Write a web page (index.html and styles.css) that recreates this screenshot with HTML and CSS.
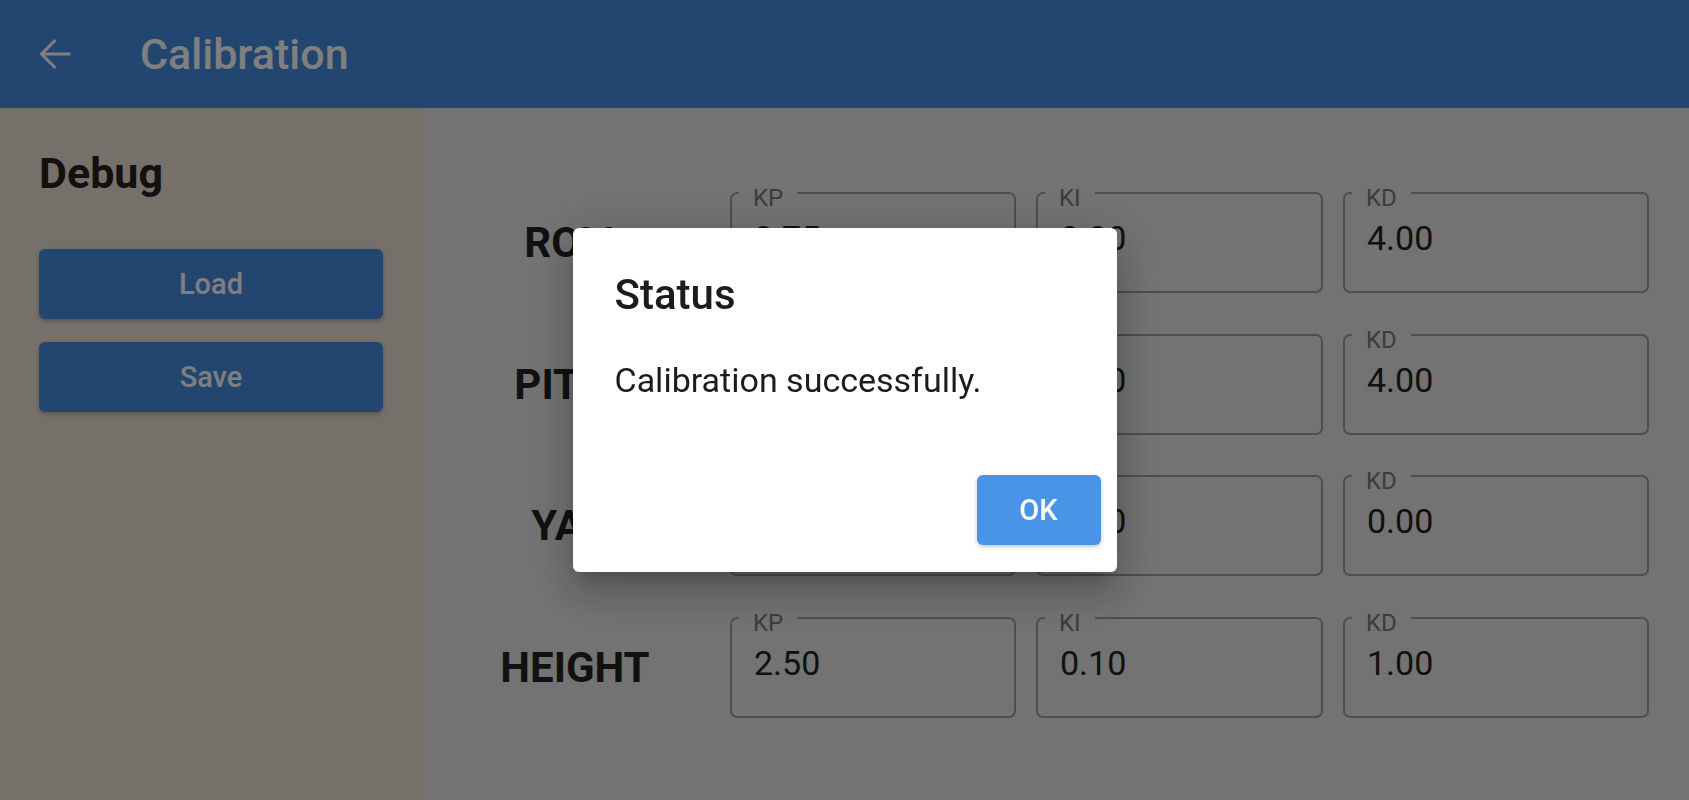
FILE: index.html
```html
<!DOCTYPE html>
<html lang="en">
<head>
<meta charset="utf-8">
<title>Calibration</title>
<link rel="stylesheet" href="styles.css">
</head>
<body>
<div class="app">
  <header class="topbar">
    <svg class="back" viewBox="0 0 32 32" aria-hidden="true">
      <path d="M31.5 16H3 M16.5 2 L2.5 16 L16.5 30" fill="none" stroke="#fff" stroke-width="3"/>
    </svg>
    <h1 class="title">Calibration</h1>
  </header>
  <main class="main">
    <aside class="side">
      <h2 class="side-title">Debug</h2>
      <button class="btn">Load</button>
      <button class="btn">Save</button>
    </aside>
    <section class="content">
      <div class="row">
        <div class="row-label">ROLL</div>
        <div class="fields">
          <div class="field"><span class="field-label">KP</span><span class="field-value">2.75</span></div>
          <div class="field"><span class="field-label">KI</span><span class="field-value">0.00</span></div>
          <div class="field"><span class="field-label">KD</span><span class="field-value">4.00</span></div>
        </div>
      </div>
      <div class="row">
        <div class="row-label">PITCH</div>
        <div class="fields">
          <div class="field"><span class="field-label">KP</span><span class="field-value">2.75</span></div>
          <div class="field"><span class="field-label">KI</span><span class="field-value">0.00</span></div>
          <div class="field"><span class="field-label">KD</span><span class="field-value">4.00</span></div>
        </div>
      </div>
      <div class="row">
        <div class="row-label">YAW</div>
        <div class="fields">
          <div class="field"><span class="field-label">KP</span><span class="field-value">3.00</span></div>
          <div class="field"><span class="field-label">KI</span><span class="field-value">0.00</span></div>
          <div class="field"><span class="field-label">KD</span><span class="field-value">0.00</span></div>
        </div>
      </div>
      <div class="row">
        <div class="row-label">HEIGHT</div>
        <div class="fields">
          <div class="field"><span class="field-label">KP</span><span class="field-value">2.50</span></div>
          <div class="field"><span class="field-label">KI</span><span class="field-value">0.10</span></div>
          <div class="field"><span class="field-label">KD</span><span class="field-value">1.00</span></div>
        </div>
      </div>
    </section>
  </main>
</div>
<div class="scrim">
  <div class="dialog" role="dialog">
    <h3 class="dialog-title">Status</h3>
    <p class="dialog-text">Calibration successfully.</p>
    <div class="dialog-actions">
      <button class="ok">OK</button>
    </div>
  </div>
</div>
</body>
</html>
```
FILE: styles.css
```css
html, body {
  margin: 0;
  padding: 0;
}
body {
  width: 1689px;
  height: 800px;
  overflow: hidden;
  font-family: Roboto, "Noto Sans", sans-serif;
}
.app {
  display: flex;
  flex-direction: column;
  height: 800px;
}
.topbar {
  flex: none;
  height: 108px;
  background: #468ce0;
  display: flex;
  align-items: center;
  padding-left: 39px;
  color: #fff;
}
.back {
  width: 32px;
  height: 32px;
  flex: none;
}
.title {
  margin: 0 0 0 69px;
  font-size: 43px;
  font-weight: 500;
  line-height: 50px;
}
.main {
  flex: 1;
  display: flex;
  min-height: 0;
}
.side {
  flex: none;
  width: 424px;
  box-sizing: border-box;
  background: #ece0d6;
  padding: 40px 41px 0 39px;
  display: flex;
  flex-direction: column;
}
.side-title {
  margin: 0 0 51px;
  font-size: 43px;
  font-weight: 700;
  line-height: 50px;
  color: #262220;
}
.btn {
  height: 70px;
  width: 100%;
  border: 0;
  border-radius: 6px;
  background: #468ce0;
  color: #fff;
  font-family: Roboto, sans-serif;
  font-size: 29px;
  font-weight: 500;
  box-shadow: 0 2px 4px rgba(0, 0, 0, 0.25);
  margin-bottom: 23px;
}
.content {
  flex: 1;
  background: #e6e6e6;
  padding: 84px 40px 0 0;
  display: flex;
  flex-direction: column;
  gap: 40.67px;
}
.row {
  display: flex;
  align-items: center;
}
.row-label {
  width: 302px;
  margin-right: 4px;
  text-align: center;
  font-size: 42px;
  font-weight: 700;
  color: #222;
}
.fields {
  display: grid;
  grid-template-columns: 286px 287px 306px;
  column-gap: 20px;
}
.field {
  position: relative;
  height: 101px;
  box-sizing: border-box;
  border: 2px solid #9c9c9c;
  border-radius: 7px;
  padding: 24px 0 0 22px;
}
.field-label {
  position: absolute;
  top: -8px;
  left: 7px;
  padding: 0 14px 0 14px;
  background: #e6e6e6;
  font-size: 24px;
  line-height: 24px;
  color: #787878;
}
.field-value {
  display: block;
  font-size: 34px;
  line-height: 40px;
  color: #222;
}
.scrim {
  position: fixed;
  inset: 0;
  background: rgba(0, 0, 0, 0.5);
  display: flex;
  align-items: center;
  justify-content: center;
}
.dialog {
  width: 544px;
  height: 344px;
  box-sizing: border-box;
  background: #fff;
  border-radius: 6px;
  padding: 42px 16px 27px 42px;
  display: flex;
  flex-direction: column;
  box-shadow: 0 11px 15px -7px rgba(0, 0, 0, 0.2), 0 24px 38px 3px rgba(0, 0, 0, 0.14), 0 9px 46px 8px rgba(0, 0, 0, 0.12);
}
.dialog-title {
  margin: 0;
  font-size: 42px;
  font-weight: 500;
  line-height: 50px;
  color: #1c1c1c;
}
.dialog-text {
  margin: 40px 0 0;
  font-size: 34px;
  line-height: 40px;
  color: #1c1c1c;
}
.dialog-actions {
  margin-top: auto;
  display: flex;
  justify-content: flex-end;
}
.ok {
  width: 124px;
  height: 70px;
  border: 0;
  border-radius: 6px;
  background: #4a94e8;
  color: #fff;
  font-family: Roboto, sans-serif;
  font-size: 29px;
  font-weight: 500;
  box-shadow: 0 2px 4px rgba(0, 0, 0, 0.22);
}
```
